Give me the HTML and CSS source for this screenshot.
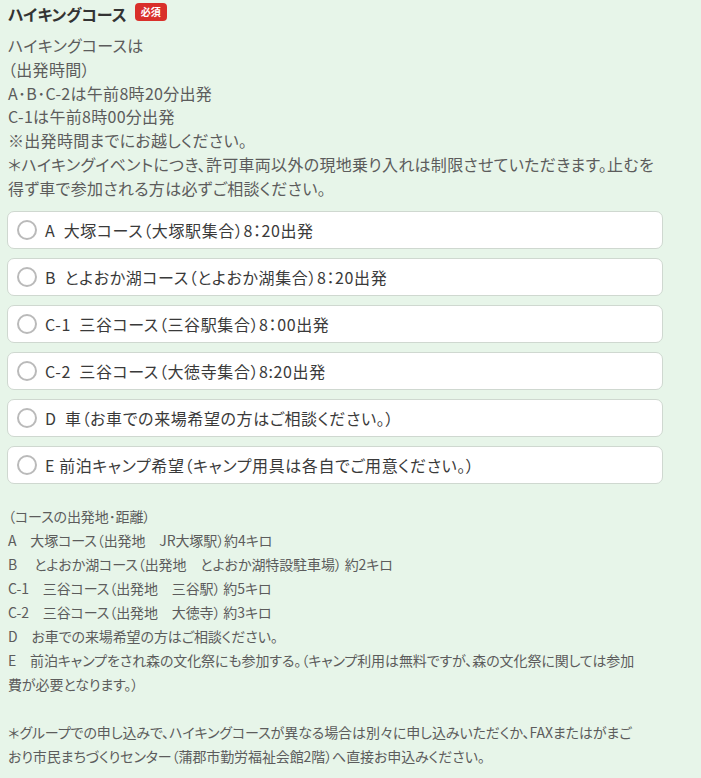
FILE: index.html
```html
<!DOCTYPE html>
<html lang="ja">
<head>
<meta charset="utf-8">
<title>ハイキングコース</title>
<link rel="stylesheet" href="styles.css">
</head>
<body>
<div class="field">
  <div class="label">
    <span class="label-text">ハイキングコース</span>
    <span class="badge">必須</span>
  </div>
  <p class="desc">ハイキングコースは<br>（出発時間）<br>A･B･C-2は午前8時20分出発<br>C-1は午前8時00分出発<br>※出発時間までにお越しください。<br>＊ハイキングイベントにつき、許可車両以外の現地乗り入れは制限させていただきます。止むを<br>得ず車で参加される方は必ずご相談ください。</p>
  <div class="options">
    <label class="option"><span class="radio"></span><span class="opt-text">A&nbsp; 大塚コース（大塚駅集合）8：20出発</span></label>
    <label class="option"><span class="radio"></span><span class="opt-text">B&nbsp; とよおか湖コース（とよおか湖集合）8：20出発</span></label>
    <label class="option"><span class="radio"></span><span class="opt-text">C-1&nbsp; 三谷コース（三谷駅集合）8：00出発</span></label>
    <label class="option"><span class="radio"></span><span class="opt-text">C-2&nbsp; 三谷コース（大徳寺集合）8:20出発</span></label>
    <label class="option"><span class="radio"></span><span class="opt-text">D&nbsp; 車（お車での来場希望の方はご相談ください。）</span></label>
    <label class="option"><span class="radio"></span><span class="opt-text">E 前泊キャンプ希望（キャンプ用具は各自でご用意ください。）</span></label>
  </div>
  <p class="notes">（コースの出発地･距離）<br>A　大塚コース（出発地　JR大塚駅）約4キロ<br>B　 とよおか湖コース（出発地　とよおか湖特設駐車場） 約2キロ<br>C-1　三谷コース（出発地　三谷駅） 約5キロ<br>C-2　三谷コース（出発地　大徳寺） 約3キロ<br>D　お車での来場希望の方はご相談ください。<br>E　前泊キャンプをされ森の文化祭にも参加する。（キャンプ利用は無料ですが、森の文化祭に関しては参加<br>費が必要となります。）<br><br>＊グループでの申し込みで、ハイキングコースが異なる場合は別々に申し込みいただくか、FAXまたはがまご<br>おり市民まちづくりセンター（蒲郡市勤労福祉会館2階）へ直接お申込みください。</p>
</div>
</body>
</html>
```

FILE: styles.css
```css
html, body {
  margin: 0;
  padding: 0;
  background: #e7f5e9;
}
body {
  font-family: "Noto Sans CJK JP", "Noto Sans", sans-serif;
  color: #5c5c5c;
  padding: 2px 0 0 8px;
}
.field {
  width: 655px;
}
.label {
  display: flex;
  align-items: center;
  gap: 8px;
  height: 24px;
}
.label-text {
  font-size: 16px;
  font-weight: bold;
  color: #333;
  line-height: 24px;
  font-feature-settings: "palt";
}
.badge {
  background: #d9302a;
  color: #fff;
  font-size: 10px;
  font-weight: bold;
  line-height: 18px;
  padding: 0 6px;
  border-radius: 4px;
  margin-top: -4px;
}
.desc {
  margin: 8px 0 0;
  font-size: 16px;
  line-height: 23.8px;
  white-space: nowrap;
  letter-spacing: 0.3px;
  font-feature-settings: "palt";
}
.options {
  display: flex;
  flex-direction: column;
  gap: 9px;
  margin-top: 10px;
}
.option {
  display: flex;
  align-items: center;
  height: 38px;
  box-sizing: border-box;
  margin-left: -1px;
  background: #fff;
  border: 1px solid #cfd8d0;
  border-radius: 7px;
  padding-left: 9px;
}
.radio {
  width: 20px;
  height: 20px;
  box-sizing: border-box;
  border: 2px solid #bababa;
  border-radius: 50%;
  background: #fff;
  flex: none;
}
.opt-text {
  margin-left: 8px;
  font-size: 16px;
  color: #3a3a3a;
  letter-spacing: 0.6px;
  font-feature-settings: "palt";
}
.notes {
  margin: 20px 0 0;
  font-size: 14px;
  line-height: 24px;
  white-space: nowrap;
  letter-spacing: -0.1px;
  font-feature-settings: "palt";
}
```
